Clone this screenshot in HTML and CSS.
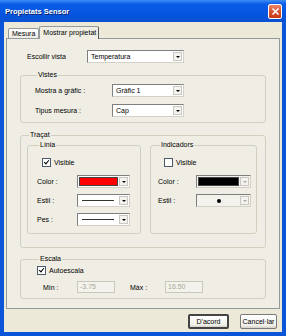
FILE: index.html
```html
<!DOCTYPE html>
<html>
<head>
    <meta charset="UTF-8">
    <title>Propietats Sensor</title>
    <link rel="stylesheet" href="styles.css">
</head>
<body>
<div class="window">
    <div class="titlebar">
        <span class="title">Propietats Sensor</span>
        <span class="close">
            <svg width="9" height="9" viewBox="0 0 9 9"><path d="M1.5 1.5 L7.5 7.5 M7.5 1.5 L1.5 7.5" stroke="#fff" stroke-width="1.6"/></svg>
        </span>
    </div>
    <div class="client">
        <div class="tabs">
            <div class="tab">Mesura</div>
            <div class="tab active">Mostrar propietat</div>
        </div>
        <div class="panel">
            <div class="row top-row">
                <span class="lbl lbl-vista">Escollir vista</span>
                <div class="select sel-vista"><span class="val">Temperatura</span><span class="arrow"></span></div>
            </div>

            <fieldset class="group vistes">
                <legend>Vistes</legend>
                <div class="row">
                    <span class="lbl lbl-vistes">Mostra a gràfic :</span>
                    <div class="select sel-vistes"><span class="val">Gràfic 1</span><span class="arrow"></span></div>
                </div>
                <div class="row next">
                    <span class="lbl lbl-vistes">Tipus mesura :</span>
                    <div class="select sel-vistes"><span class="val">Cap</span><span class="arrow"></span></div>
                </div>
            </fieldset>

            <fieldset class="group tracat">
                <legend>Traçat</legend>
                <div class="inner">
                    <fieldset class="group linia">
                        <legend>Línia</legend>
                        <div class="check-row"><span class="check on"></span><span>Visible</span></div>
                        <div class="row first">
                            <span class="lbl lbl-linia">Color :</span>
                            <div class="select sel-linia"><span class="swatch red"></span><span class="arrow"></span></div>
                        </div>
                        <div class="row gap6">
                            <span class="lbl lbl-linia">Estil :</span>
                            <div class="select sel-linia"><span class="line"></span><span class="arrow"></span></div>
                        </div>
                        <div class="row gap6">
                            <span class="lbl lbl-linia">Pes :</span>
                            <div class="select sel-linia"><span class="line"></span><span class="arrow"></span></div>
                        </div>
                    </fieldset>
                    <fieldset class="group indicadors">
                        <legend>Indicadors</legend>
                        <div class="check-row"><span class="check"></span><span>Visible</span></div>
                        <div class="row first">
                            <span class="lbl lbl-ind">Color :</span>
                            <div class="select sel-ind disabled"><span class="swatch black"></span><span class="arrow"></span></div>
                        </div>
                        <div class="row gap6">
                            <span class="lbl lbl-ind">Estil :</span>
                            <div class="select sel-ind disabled"><span class="dot-wrap"><span class="dot"></span></span><span class="arrow"></span></div>
                        </div>
                    </fieldset>
                </div>
            </fieldset>

            <fieldset class="group escala">
                <legend>Escala</legend>
                <div class="check-row"><span class="check on"></span><span>Autoescala</span></div>
                <div class="row range">
                    <span class="lbl lbl-min">Mín :</span>
                    <div class="input">-3.75</div>
                    <span class="lbl lbl-max">Màx :</span>
                    <div class="input">16.50</div>
                </div>
            </fieldset>
        </div>
        <div class="buttons">
            <div class="button default">D'acord</div>
            <div class="button cancel">Cancel·lar</div>
        </div>
    </div>
</div>
</body>
</html>
```

FILE: styles.css
```css
:root {
    --face: #ece9d8;
    --pane: #efede4;
    --frame: #0a55d8;
    --group: #d0d0bf;
    --edge: #919b9c;
}
body {
    margin: 0;
    font-family: 'Liberation Sans', Arial, sans-serif;
    font-size: 7px;
    color: #000;
    background: #fff;
}
.window {
    width: 286px;
    height: 336px;
    background: var(--frame);
    display: flex;
    flex-direction: column;
}
.titlebar {
    height: 22px;
    display: flex;
    align-items: center;
    justify-content: space-between;
    padding: 0 4px 0 5px;
    background: linear-gradient(#3d8ef3, #0a5ce6 18%, #0555e0 60%, #0a52d2);
    color: #fff;
}
.title {
    font-size: 7.5px;
    font-weight: bold;
    text-shadow: 1px 1px #0a246a;
}
.close {
    width: 12px;
    height: 13px;
    display: flex;
    align-items: center;
    justify-content: center;
    background: linear-gradient(#e9866a, #d8532e 50%, #c43b17);
    border: 1px solid #fff;
    border-radius: 2px;
}
.client {
    flex: 1;
    margin: 0 4px 4px;
    background: var(--face);
    padding: 4px 2px 0;
    display: flex;
    flex-direction: column;
}

/* tabs */
.tabs {
    display: flex;
    align-items: flex-end;
    padding-left: 2px;
    height: 12px;
    position: relative;
    z-index: 1;
}
.tab {
    height: 9px;
    line-height: 9px;
    padding: 0 3px;
    white-space: nowrap;
    border: 1px solid var(--edge);
    border-bottom: none;
    border-radius: 2px 2px 0 0;
    background: linear-gradient(#fff, #ecebe5);
}
.tab.active {
    height: 12px;
    line-height: 11px;
    padding: 0 2px 0 3px;
    background: var(--pane);
    border-right-color: #555;
    margin-bottom: -1px;
}
.panel {
    height: 271px;
    box-sizing: border-box;
    border: 1px solid var(--edge);
    background: var(--pane);
}

/* rows */
.row {
    display: flex;
    align-items: center;
    height: 13px;
}
.row.next { margin-top: 7px; }
.row.first { margin-top: 8px; }
.row.gap6 { margin-top: 6px; }
.top-row {
    margin-top: 11px;
    padding-left: 20px;
}
.lbl { flex: none; }
.lbl-vista { width: 60px; }
.lbl-vistes { width: 77px; }
.lbl-linia { width: 40px; }
.lbl-ind { width: 38px; }

/* group boxes */
.group {
    margin: 0;
    box-sizing: border-box;
    border: 1px solid var(--group);
    border-radius: 3px;
}
.group legend {
    padding: 0 1px;
    margin-left: 2px;
    line-height: 10px;
    height: 10px;
}
.vistes {
    margin: 7px 0 0 13px;
    width: 246px;
    padding: 4px 0 5px 14px;
}
.tracat {
    margin: 7px 0 0 13px;
    width: 246px;
    padding: 0 0 13px 6px;
}
.inner {
    display: flex;
    gap: 9px;
}
.linia {
    width: 114px;
    padding: 8px 0 7px 9px;
}
.indicadors {
    width: 107px;
    padding: 8px 0 7px 7px;
}
.escala {
    margin: 6px 0 0 13px;
    width: 246px;
    padding: 2px 0 5px 16px;
}

/* check boxes */
.check-row {
    display: flex;
    align-items: center;
    gap: 3px;
    height: 9px;
}
.linia .check-row { padding-left: 5px; }
.indicadors .check-row { padding-left: 6px; }
.escala .check-row { padding-left: 0; }
.check {
    width: 7px;
    height: 7px;
    border: 1px solid #4a5a6a;
    background: #fff;
    position: relative;
}
.check.on::after {
    content: "";
    position: absolute;
    left: 2px;
    top: 0;
    width: 2px;
    height: 4px;
    border: solid #000;
    border-width: 0 1.5px 1.5px 0;
    transform: rotate(40deg);
}

/* dropdowns */
.select {
    height: 13px;
    box-sizing: border-box;
    border: 1px solid #7f7f7f;
    border-right-color: #d4d0c8;
    border-bottom-color: #d4d0c8;
    background: #fff;
    display: flex;
    align-items: center;
    padding: 1px;
}
.sel-vista { width: 97px; }
.sel-vistes { width: 72px; }
.sel-linia { width: 53px; }
.sel-ind { width: 55px; }
.select .val {
    flex: 1;
    padding-left: 2px;
}
.select .arrow {
    flex: none;
    width: 9px;
    height: 9px;
    box-sizing: border-box;
    border: 1px solid #c9c7c0;
    background: #f4f3ef;
    position: relative;
}
.select .arrow::after {
    content: "";
    position: absolute;
    left: 2px;
    top: 3px;
    border-left: 2px solid transparent;
    border-right: 2px solid transparent;
    border-top: 2px solid #000;
}
.select.disabled { background: #f3f2ec; }
.select.disabled .arrow::after { border-top-color: #aaa; }
.swatch {
    flex: 1;
    height: 9px;
    box-sizing: border-box;
    border: 1px solid #444;
    margin-right: 1px;
}
.swatch.red { background: #ff0000; }
.swatch.black { background: #000; }
.line {
    flex: 1;
    height: 1px;
    background: #333;
    margin: 0 5px 0 3px;
}
.dot-wrap {
    flex: 1;
    display: flex;
    justify-content: center;
}
.dot {
    width: 4px;
    height: 4px;
    border-radius: 50%;
    background: #000;
}

/* min / max */
.range {
    margin-top: 6px;
    height: 12px;
}
.lbl-min { width: 34px; padding-left: 6px; }
.lbl-max { width: 35px; padding-left: 15px; }
.input {
    width: 38px;
    height: 12px;
    box-sizing: border-box;
    border: 1px solid #c9c7ba;
    background: #f3f2ec;
    color: #aca899;
    padding-left: 2px;
    line-height: 10px;
}

/* buttons */
.buttons {
    display: flex;
    justify-content: flex-end;
    gap: 11px;
    margin-top: 5px;
    padding-right: 3px;
}
.button {
    height: 15px;
    box-sizing: border-box;
    border: 1px solid #003c74;
    border-radius: 2px;
    background: linear-gradient(#fff, #f0f0ea 80%, #d6d0c5);
    display: flex;
    align-items: center;
    justify-content: center;
}
.button.default {
    width: 41px;
    border: 2px solid #444;
}
.button.cancel {
    width: 37px;
    border-color: #7a7a7a;
}
```
